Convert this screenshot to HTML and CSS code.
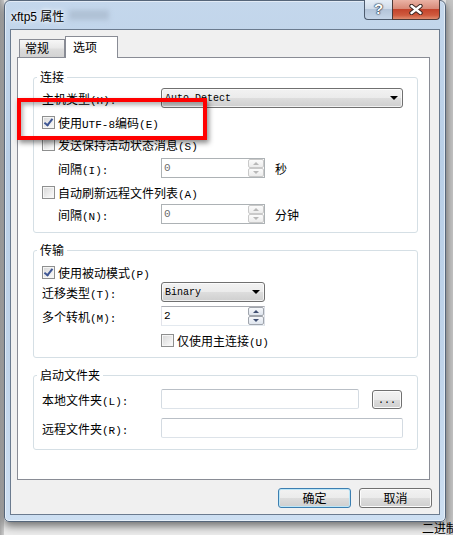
FILE: index.html
```html
<!DOCTYPE html>
<html lang="zh-CN">
<head>
  <meta charset="UTF-8">
  <title>xftp5 属性</title>
  <link rel="stylesheet" href="styles.css">
</head>
<body>

  <!-- Ventana de propiedades -->
  <div class="window">
    <div class="title-bar">
      <span class="title">xftp5 属性</span>
      <span class="title-blur"></span>
      <div class="caption">
        <span class="cap-help">?</span>
        <span class="cap-close">
          <svg width="14" height="11" viewBox="0 0 14 11">
            <path d="M2.5 2 L11.5 9 M11.5 2 L2.5 9" stroke="#3b2622" stroke-width="4.4" stroke-linecap="round"/>
            <path d="M2.5 2 L11.5 9 M11.5 2 L2.5 9" stroke="#fff" stroke-width="2.4" stroke-linecap="round"/>
          </svg>
        </span>
      </div>
    </div>

    <div class="client">
      <div class="tabs">
        <span class="tab">常规</span>
        <span class="tab active">选项</span>
      </div>

      <div class="panel">
        <!-- 连接 -->
        <fieldset class="group g-conn">
          <legend>连接</legend>
          <div class="row">
            <span class="label">主机类型<span class="en">(H):</span></span>
            <div class="combo combo-wide"><span>Auto Detect</span><span class="arrow"></span></div>
          </div>
          <div class="row">
            <label class="check"><span class="box on"></span><span>使用<span class="en">UTF-8</span>编码<span class="en">(E)</span></span></label>
          </div>
          <div class="row h20">
            <label class="check"><span class="box"></span><span>发送保持活动状态消息<span class="en">(S)</span></span></label>
          </div>
          <div class="row h28">
            <span class="label indent">间隔<span class="en">(I):</span></span>
            <div class="spin off"><span>0</span><span class="spin-btns"><span class="up"></span><span class="down"></span></span></div>
            <span class="unit">秒</span>
          </div>
          <div class="row h20">
            <label class="check"><span class="box"></span><span>自动刷新远程文件列表<span class="en">(A)</span></span></label>
          </div>
          <div class="row">
            <span class="label indent">间隔<span class="en">(N):</span></span>
            <div class="spin off"><span>0</span><span class="spin-btns"><span class="up"></span><span class="down"></span></span></div>
            <span class="unit">分钟</span>
          </div>
        </fieldset>

        <!-- 传输 -->
        <fieldset class="group g-trans">
          <legend>传输</legend>
          <div class="row h20">
            <label class="check"><span class="box on"></span><span>使用被动模式<span class="en">(P)</span></span></label>
          </div>
          <div class="row h20">
            <span class="label">迁移类型<span class="en">(T):</span></span>
            <div class="combo combo-short"><span>Binary</span><span class="arrow"></span></div>
          </div>
          <div class="row h28">
            <span class="label">多个转机<span class="en">(M):</span></span>
            <div class="spin"><span>2</span><span class="spin-btns"><span class="up"></span><span class="down"></span></span></div>
          </div>
          <div class="row h20">
            <label class="check push"><span class="box"></span><span>仅使用主连接<span class="en">(U)</span></span></label>
          </div>
        </fieldset>

        <!-- 启动文件夹 -->
        <fieldset class="group g-start">
          <legend>启动文件夹</legend>
          <div class="row">
            <span class="label">本地文件夹<span class="en">(L):</span></span>
            <div class="text-input local"></div>
            <button class="btn btn-dots">...</button>
          </div>
          <div class="row r-remote">
            <span class="label">远程文件夹<span class="en">(R):</span></span>
            <div class="text-input remote"></div>
          </div>
        </fieldset>
      </div>

      <div class="actions">
        <button class="btn default">确定</button>
        <button class="btn">取消</button>
      </div>
    </div>
  </div>

  <!-- Marca roja sobre la captura -->
  <div class="mark"></div>

  <span class="behind-text">二进制</span>

</body>
</html>
```

FILE: styles.css
```css
* {
  box-sizing: border-box;
}

body {
  margin: 0;
  width: 453px;
  height: 535px;
  overflow: hidden;
  position: relative;
  font-family: "Noto Sans CJK SC", sans-serif;
  font-size: 12px;
  color: #000;
  background: linear-gradient(to right, #a8a8a8 0, #cdcdcd 4px, #ededed 4px, #ededed 446px, #c6c6c6 446px);
}

.en {
  font-family: "Liberation Mono", monospace;
  font-size: 11px;
}

/* ventana */
.window {
  width: 442px;
  height: 522px;
  margin-left: 4px;
  padding: 0 5px 6px;
  border: 1px solid #56667a;
  border-radius: 6px 6px 5px 5px;
  background: linear-gradient(#c4d7ec, #b9cfe7 30%, #c0d4ea 70%, #cddff2);
  box-shadow: 0 4px 10px rgba(0, 0, 0, 0.55), inset 0 0 0 1px rgba(255, 255, 255, 0.5);
  display: flex;
  flex-direction: column;
}

.title-bar {
  height: 28px;
  padding-left: 1px;
  display: flex;
  align-items: center;
}

.title {
  font-family: "Liberation Sans", "Noto Sans CJK SC", sans-serif;
  font-size: 12px;
  text-shadow: 0 0 6px #fff, 0 0 3px #fff;
}

.title-blur {
  width: 40px;
  height: 10px;
  margin-left: 5px;
  background: #a3b3c6;
  filter: blur(2.5px);
  opacity: 0.6;
}

.caption {
  margin-left: auto;
  margin-top: -1px;
  align-self: flex-start;
  display: flex;
}

.cap-help {
  width: 28px;
  height: 20px;
  border: 1px solid #4d5b6e;
  border-top: none;
  border-right: none;
  border-radius: 0 0 0 4px;
  background: linear-gradient(#e6eef7, #d0dcea 45%, #b3c4d9 50%, #c5d5e8);
  color: #fff;
  font: bold 15px/18px "Liberation Sans", sans-serif;
  text-align: center;
  text-shadow: 0 0 1px #1c2a3c, 0 0 1px #1c2a3c, 0 0 2px #1c2a3c;
}

.cap-close {
  width: 48px;
  height: 20px;
  border: 1px solid #4d3a38;
  border-top: none;
  border-radius: 0 0 4px 0;
  background: linear-gradient(#eab3a5, #d88a78 45%, #c3442c 50%, #cf5a3e 80%, #df8c6f);
  display: flex;
  align-items: center;
  justify-content: center;
}

/* area cliente */
.client {
  flex: 1;
  padding: 6px 7px 6px 6px;
  background: #f0f0f0;
  border: 1px solid #6b7b8f;
  display: flex;
  flex-direction: column;
}

.tabs {
  height: 21px;
  padding-left: 2px;
  display: flex;
  align-items: flex-end;
}

.tab {
  width: 46px;
  height: 18px;
  padding-left: 5px;
  line-height: 16px;
  border: 1px solid #898c95;
  border-bottom: none;
  background: linear-gradient(#f7f7f7, #e9e9e9 45%, #dcdcdc 55%, #d2d2d2);
}

.tab.active {
  width: 53px;
  height: 22px;
  margin-bottom: -1px;
  padding-left: 7px;
  line-height: 20px;
  background: #fff;
  position: relative;
  z-index: 1;
}

.panel {
  flex: 1;
  margin-right: 2px;
  padding: 11px 11px 0 15px;
  background: #fff;
  border: 1px solid #898c95;
}

.group {
  margin: 0;
  min-width: 0;
  padding: 1px 8px 6px;
  border: 1px solid #d5dfe5;
  border-radius: 3px;
}

.group + .group {
  margin-top: 9px;
}

.group legend {
  margin-left: -5px;
  padding: 0 3px;
  line-height: 16px;
}

.g-trans {
  padding-top: 4px;
  padding-bottom: 7px;
}

.g-start {
  padding-top: 4px;
  padding-bottom: 9px;
}

.row {
  height: 24px;
  display: flex;
  align-items: center;
}

.row.h20 {
  height: 20px;
}

.row.h28 {
  height: 28px;
}

.r-remote {
  margin-top: 5px;
}

.label {
  width: 119px;
  flex-shrink: 0;
}

.label.indent {
  padding-left: 16px;
}

.unit {
  margin-left: 10px;
}

/* casillas */
.check {
  display: flex;
  align-items: center;
  gap: 3px;
}

.check.push {
  margin-left: 119px;
}

.box {
  width: 13px;
  height: 13px;
  flex-shrink: 0;
  position: relative;
  border: 1px solid #8e8f8f;
  background: linear-gradient(135deg, #d6d6d6, #fdfdfd);
  box-shadow: inset 0 0 0 1px #f6f6f6;
}

.box.on::after {
  content: "";
  position: absolute;
  left: 3px;
  top: 0;
  width: 3px;
  height: 7px;
  border-right: 2px solid #3d5594;
  border-bottom: 2px solid #3d5594;
  transform: rotate(38deg);
}

/* combos y spinners */
.combo {
  height: 20px;
  padding: 0 4px 0 3px;
  border: 1px solid #707070;
  border-radius: 3px;
  background: linear-gradient(#f2f2f2, #ebebeb 50%, #dddddd 50%, #cfcfcf);
  box-shadow: inset 0 0 0 1px rgba(255, 255, 255, 0.7);
  font-family: "Liberation Mono", monospace;
  font-size: 10px;
  display: flex;
  align-items: center;
  justify-content: space-between;
}

.combo-wide {
  width: 242px;
}

.combo-short {
  width: 104px;
}

.arrow {
  width: 0;
  height: 0;
  border-left: 4px solid transparent;
  border-right: 4px solid transparent;
  border-top: 4px solid #000;
}

.spin {
  width: 104px;
  height: 20px;
  padding-left: 2px;
  background: #fff;
  border: 1px solid;
  border-color: #abadb3 #dbdfe6 #e3e9ef #e2e3ea;
  font-family: "Liberation Mono", monospace;
  font-size: 11px;
  display: flex;
  align-items: center;
  justify-content: space-between;
}

.spin.off {
  border-color: #adb2b5;
  color: #6d6d6d;
}

.spin-btns {
  display: flex;
  flex-direction: column;
}

.spin-btns span {
  width: 16px;
  height: 9px;
  border: 1px solid #c9c9c9;
  border-radius: 2px;
  background: linear-gradient(#fbfbfb, #ececec);
  display: flex;
  align-items: center;
  justify-content: center;
}

.spin-btns span::after {
  content: "";
  border-left: 3px solid transparent;
  border-right: 3px solid transparent;
}

.spin-btns .up::after {
  border-bottom: 3px solid #b8b8b8;
}

.spin-btns .down::after {
  border-top: 3px solid #b8b8b8;
}

.spin:not(.off) .spin-btns span {
  border-color: #a0a5ad;
  background: linear-gradient(#f6f8fb, #dfe5ee);
}

.spin:not(.off) .up::after {
  border-bottom-color: #3f4f72;
}

.spin:not(.off) .down::after {
  border-top-color: #3f4f72;
}

.text-input {
  height: 20px;
  background: #fff;
  border: 1px solid;
  border-color: #b9bfc6 #d4dbe2 #dde3e9 #d4dbe2;
  border-radius: 2px;
}

.text-input.local {
  width: 198px;
}

.text-input.remote {
  width: 242px;
}

/* botones */
.btn {
  width: 73px;
  height: 20px;
  padding: 0;
  border: 1px solid #707070;
  border-radius: 3px;
  background: linear-gradient(#f2f2f2, #ebebeb 50%, #dddddd 50%, #cfcfcf);
  box-shadow: inset 0 0 0 1px #fcfcfc;
  font-family: "Noto Sans CJK SC", sans-serif;
  font-size: 12px;
  line-height: 18px;
  color: #000;
}

.btn.default {
  border-color: #3c7fb1;
  box-shadow: inset 0 0 0 1px #bde6f7;
}

.btn-dots {
  width: 30px;
  height: 19px;
  margin-left: 13px;
  font-family: "Liberation Mono", monospace;
  font-size: 10px;
  line-height: 20px;
}

.actions {
  margin-top: 8px;
  display: flex;
  justify-content: flex-end;
  gap: 8px;
}

/* marca roja */
.mark {
  position: absolute;
  left: 17px;
  top: 98px;
  width: 190px;
  height: 42px;
  border: 4px solid #f00;
  box-shadow: 2px 3px 5px rgba(0, 0, 0, 0.45), inset 2px 3px 4px rgba(0, 0, 0, 0.3);
}

.behind-text {
  position: absolute;
  left: 422px;
  top: 519px;
  white-space: nowrap;
}
```
